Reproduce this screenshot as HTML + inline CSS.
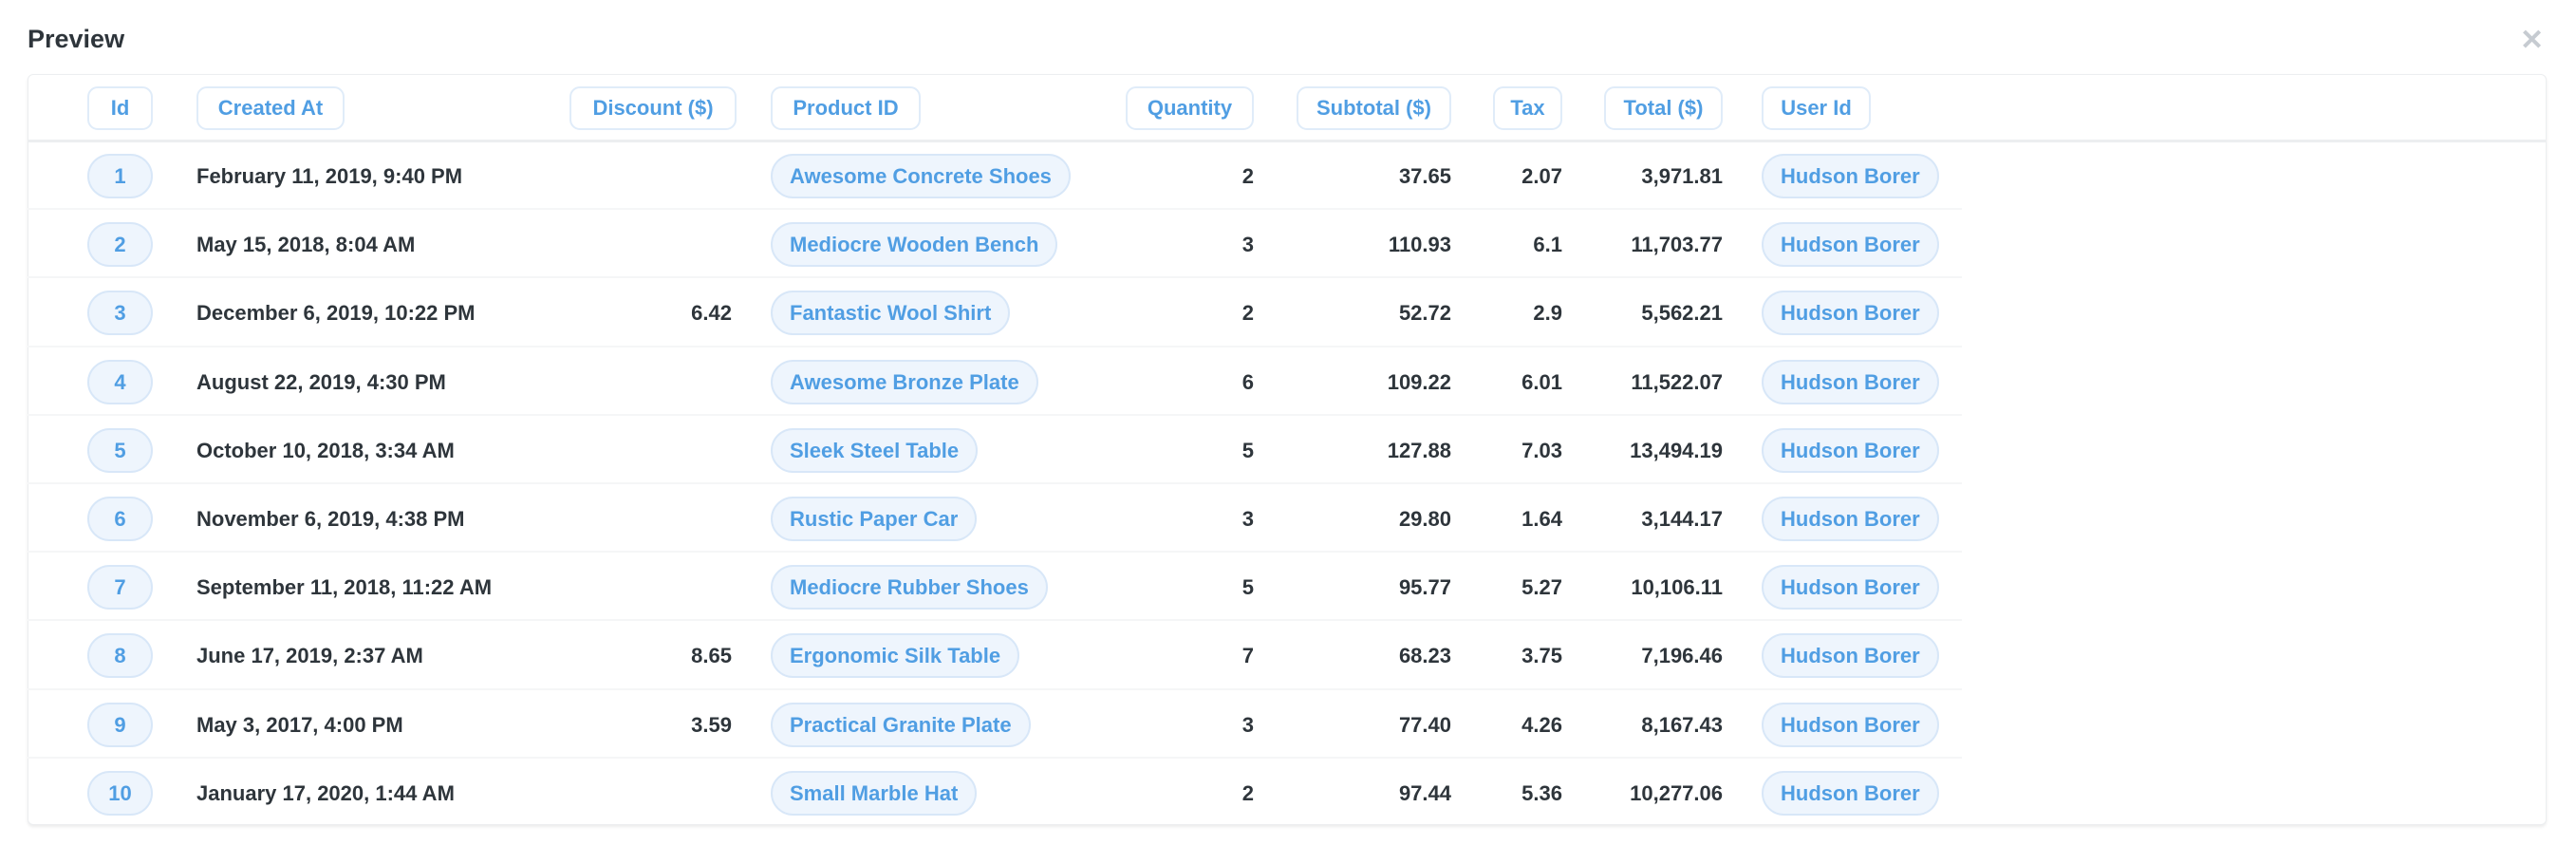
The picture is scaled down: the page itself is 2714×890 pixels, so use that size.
<!DOCTYPE html>
<html><head><meta charset="utf-8"><style>
*{margin:0;padding:0;box-sizing:border-box}
body{width:2714px;height:890px;background:#fff;font-family:"Liberation Sans",sans-serif;position:relative;overflow:hidden;color:#2e353b}
.title{position:absolute;left:29px;top:26px;font-size:27px;font-weight:bold;color:#2e353b}
.x{position:absolute;left:2655px;top:28px;font-size:30px;color:#c6cbd1;font-weight:bold;line-height:30px}
.card{position:absolute;left:29px;top:78px;width:2654px;height:791px;border:1px solid #eceef0;border-radius:6px;box-shadow:0 2px 3px rgba(0,0,0,.08);background:#fff}
.hb{position:absolute;left:29px;top:147px;width:2654px;height:3px;background:#eceef0}
.sep{position:absolute;left:29px;width:2038px;height:2px;background:#f5f6f7}
.hp{position:absolute;height:46px;top:91px;border:2px solid #e0ecf9;border-radius:11px;color:#509ee3;font-weight:bold;font-size:22px;line-height:42px;text-align:center;white-space:nowrap}
.pill{position:absolute;height:47px;border:2px solid #d8e7f8;background:#eef5fd;border-radius:24px;color:#509ee3;font-weight:bold;font-size:22px;line-height:43px;text-align:center;white-space:nowrap;padding:0 18px}
.idp{padding:0}
.t{position:absolute;font-size:22px;font-weight:bold;line-height:47px;white-space:nowrap;color:#2e353b}
.r{text-align:right}
</style></head><body>
<div class="title">Preview</div>
<div class="x">✕</div>
<div class="card"></div>
<div class="hb"></div>
<div class="hp" style="left:92px;width:69px">Id</div>
<div class="hp" style="left:207px;width:156px">Created At</div>
<div class="hp" style="left:600px;width:176px">Discount ($)</div>
<div class="hp" style="left:812px;width:158px">Product ID</div>
<div class="hp" style="left:1186px;width:135px">Quantity</div>
<div class="hp" style="left:1366px;width:163px">Subtotal ($)</div>
<div class="hp" style="left:1573px;width:73px">Tax</div>
<div class="hp" style="left:1690px;width:125px">Total ($)</div>
<div class="hp" style="left:1856px;width:115px">User Id</div>
<div id="rows"></div>
<script>
var d=[
["1","February 11, 2019, 9:40 PM","","Awesome Concrete Shoes","2","37.65","2.07","3,971.81"],
["2","May 15, 2018, 8:04 AM","","Mediocre Wooden Bench","3","110.93","6.1","11,703.77"],
["3","December 6, 2019, 10:22 PM","6.42","Fantastic Wool Shirt","2","52.72","2.9","5,562.21"],
["4","August 22, 2019, 4:30 PM","","Awesome Bronze Plate","6","109.22","6.01","11,522.07"],
["5","October 10, 2018, 3:34 AM","","Sleek Steel Table","5","127.88","7.03","13,494.19"],
["6","November 6, 2019, 4:38 PM","","Rustic Paper Car","3","29.80","1.64","3,144.17"],
["7","September 11, 2018, 11:22 AM","","Mediocre Rubber Shoes","5","95.77","5.27","10,106.11"],
["8","June 17, 2019, 2:37 AM","8.65","Ergonomic Silk Table","7","68.23","3.75","7,196.46"],
["9","May 3, 2017, 4:00 PM","3.59","Practical Granite Plate","3","77.40","4.26","8,167.43"],
["10","January 17, 2020, 1:44 AM","","Small Marble Hat","2","97.44","5.36","10,277.06"]];
var h="";
d.forEach(function(r,i){var top=162+i*72.2;
if(i>0)h+='<div class="sep" style="top:'+(top-15)+'px"></div>';
h+='<div class="pill idp" style="left:92px;width:69px;top:'+top+'px">'+r[0]+'</div>';
h+='<div class="t" style="left:207px;top:'+top+'px">'+r[1]+'</div>';
h+='<div class="t r" style="left:600px;width:171px;top:'+top+'px">'+r[2]+'</div>';
h+='<div class="pill" style="left:812px;top:'+top+'px">'+r[3]+'</div>';
h+='<div class="t r" style="left:1186px;width:135px;top:'+top+'px">'+r[4]+'</div>';
h+='<div class="t r" style="left:1366px;width:163px;top:'+top+'px">'+r[5]+'</div>';
h+='<div class="t r" style="left:1573px;width:73px;top:'+top+'px">'+r[6]+'</div>';
h+='<div class="t r" style="left:1690px;width:125px;top:'+top+'px">'+r[7]+'</div>';
h+='<div class="pill" style="left:1856px;top:'+top+'px">Hudson Borer</div>';
});
document.getElementById("rows").innerHTML=h;
</script>
</body></html>
